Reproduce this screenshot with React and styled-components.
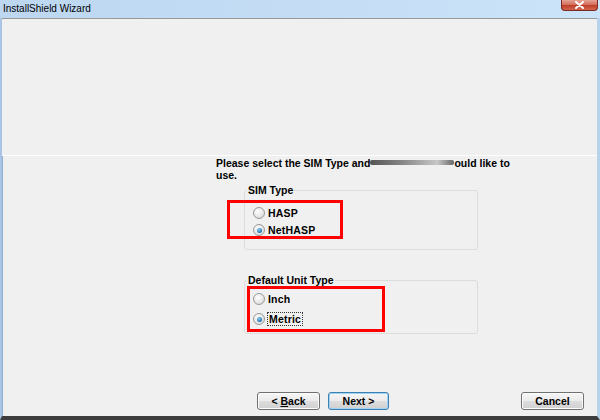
import React from "react";
import styled, { createGlobalStyle } from "styled-components";

const GlobalStyle = createGlobalStyle`
  html, body {
    margin: 0;
    padding: 0;
    background: #f0f0f0;
  }
`;

const Window = styled.div`
  width: 600px;
  height: 420px;
  display: flex;
  flex-direction: column;
  overflow: hidden;
  font-family: "Liberation Sans", Arial, sans-serif;
  background: #f0f0f0;
`;

const TitleBar = styled.div`
  height: 18px;
  flex: none;
  display: flex;
  align-items: flex-start;
  justify-content: space-between;
  background: linear-gradient(90deg, #bdd7f1 0%, #c4ddf5 50%, #cbe4f9 100%);
`;

const Title = styled.span`
  font-family: "Liberation Sans", Arial, sans-serif;
  font-size: 10px;
  color: #000;
  padding: 2px 0 0 3px;
  line-height: 13px;
`;

const CloseButton = styled.div`
  width: 35px;
  height: 10px;
  margin-right: 2px;
  border: 1px solid #7a2a20;
  border-top: none;
  border-radius: 0 0 4px 4px;
  background: linear-gradient(180deg, #e6a395 0%, #d4705c 45%, #c0402a 55%, #d2664f 100%);
  display: flex;
  align-items: center;
  justify-content: center;
`;

const Frame = styled.div`
  flex: 1;
  display: flex;
  flex-direction: column;
  border-left: 2px solid #a9c5e3;
  border-right: 3px solid #b8d2ec;
  border-bottom: 4px solid #3d3d3d;
`;

const TopPanel = styled.div`
  height: 136px;
  flex: none;
  border-top: 1px solid #9a9a9a;
  border-bottom: 1px solid #ffffff;
  background: #f0f0f0;
`;

const Content = styled.div`
  flex: 1;
  display: flex;
  flex-direction: column;
  padding: 1px 0 0 213px;
  border-left: 1px solid #8fb1d6;
`;

const Prompt = styled.p`
  margin: 0;
  width: 308px;
  font-size: 10.5px;
  font-weight: bold;
  line-height: 12px;
  color: #000;
`;

const Smear = styled.span`
  display: inline-block;
  width: 84px;
  height: 5px;
  vertical-align: 2px;
  background: linear-gradient(90deg, #555 0%, #888 40%, #c8c8c8 80%, #666 100%);
  border-radius: 2px;
  filter: blur(0.6px);
`;

const GroupBox = styled.fieldset`
  position: relative;
  margin: ${(p) => p.$top}px 0 0 28px;
  width: 234px;
  height: ${(p) => p.$height}px;
  box-sizing: border-box;
  padding: ${(p) => p.$pad}px 0 0 8px;
  border: 1px solid #dcdcdc;
  border-radius: 3px;
  display: flex;
  flex-direction: column;
  gap: ${(p) => p.$gap}px;
`;

const Legend = styled.legend`
  font-size: 10.5px;
  font-weight: bold;
  color: #000;
  padding: 0 1px;
  margin-left: -6px;
`;

const Option = styled.label`
  display: flex;
  align-items: center;
  gap: 3px;
  font-size: 10.5px;
  font-weight: bold;
  letter-spacing: 0.2px;
  color: #000;
  height: 14px;
`;

const Radio = styled.span`
  width: 10px;
  height: 10px;
  border-radius: 50%;
  border: 1px solid #9a9a9a;
  background: radial-gradient(circle at 40% 35%, #ffffff 0%, #e4e4e4 60%, #cfcfcf 100%);
  display: flex;
  align-items: center;
  justify-content: center;

  &::after {
    content: "";
    display: ${(p) => (p.$checked ? "block" : "none")};
    width: 5px;
    height: 5px;
    border-radius: 50%;
    background: radial-gradient(circle at 40% 35%, #8fd0f5 0%, #1d6fb0 70%, #0e4f86 100%);
  }
`;

const Focused = styled.span`
  outline: 1px dotted #333;
  padding: 0 1px;
`;

const Marker = styled.div`
  position: absolute;
  left: ${(p) => p.$left}px;
  top: ${(p) => p.$top}px;
  width: ${(p) => p.$width}px;
  height: ${(p) => p.$height}px;
  border: 3px solid #ff0000;
  box-sizing: border-box;
  pointer-events: none;
`;

const ButtonRow = styled.div`
  margin-top: auto;
  margin-bottom: 6px;
  margin-left: 41px;
  display: flex;
  gap: 8px;
`;

const Button = styled.button`
  width: ${(p) => p.$width || 63}px;
  height: 18px;
  padding: 0;
  margin-left: ${(p) => p.$push || 0}px;
  font-family: "Liberation Sans", Arial, sans-serif;
  font-size: 10.5px;
  font-weight: bold;
  color: #000;
  border: 1px solid ${(p) => (p.$default ? "#3c7fb1" : "#707070")};
  border-radius: 3px;
  background: linear-gradient(180deg, #f6f6f6 0%, #ebebeb 48%, #dddddd 52%, #cfcfcf 100%);
  box-shadow: inset 0 0 0 1px ${(p) => (p.$default ? "#9fd3f3" : "#fcfcfc")};
`;

const Key = styled.u`
  text-decoration: underline;
`;

export default function App() {
  return (
    <>
      <GlobalStyle />
      <Window>
        <TitleBar>
          <Title>InstallShield Wizard</Title>
          <CloseButton>
            <svg width="9" height="8" viewBox="0 0 9 8">
              <path d="M1 1 L8 7 M8 1 L1 7" stroke="#fff" strokeWidth="2" strokeLinecap="round" />
            </svg>
          </CloseButton>
        </TitleBar>
        <Frame>
          <TopPanel />
          <Content>
            <Prompt>
              Please select the SIM Type and<Smear />ould like to use.
            </Prompt>
            <GroupBox $top={3} $height={66} $pad={10} $gap={3}>
              <Legend>SIM Type</Legend>
              <Marker $left={-18} $top={4} $width={116} $height={39} />
              <Option>
                <Radio />
                HASP
              </Option>
              <Option>
                <Radio $checked />
                NetHASP
              </Option>
            </GroupBox>
            <GroupBox $top={24} $height={60} $pad={6} $gap={6}>
              <Legend>Default Unit Type</Legend>
              <Marker $left={2} $top={0} $width={138} $height={46} />
              <Option>
                <Radio />
                Inch
              </Option>
              <Option>
                <Radio $checked />
                <Focused>Metric</Focused>
              </Option>
            </GroupBox>
            <ButtonRow>
              <Button>
                &lt; <Key>B</Key>ack
              </Button>
              <Button $default $width={61}>
                Next &gt;
              </Button>
              <Button $push={124}>Cancel</Button>
            </ButtonRow>
          </Content>
        </Frame>
      </Window>
    </>
  );
}
